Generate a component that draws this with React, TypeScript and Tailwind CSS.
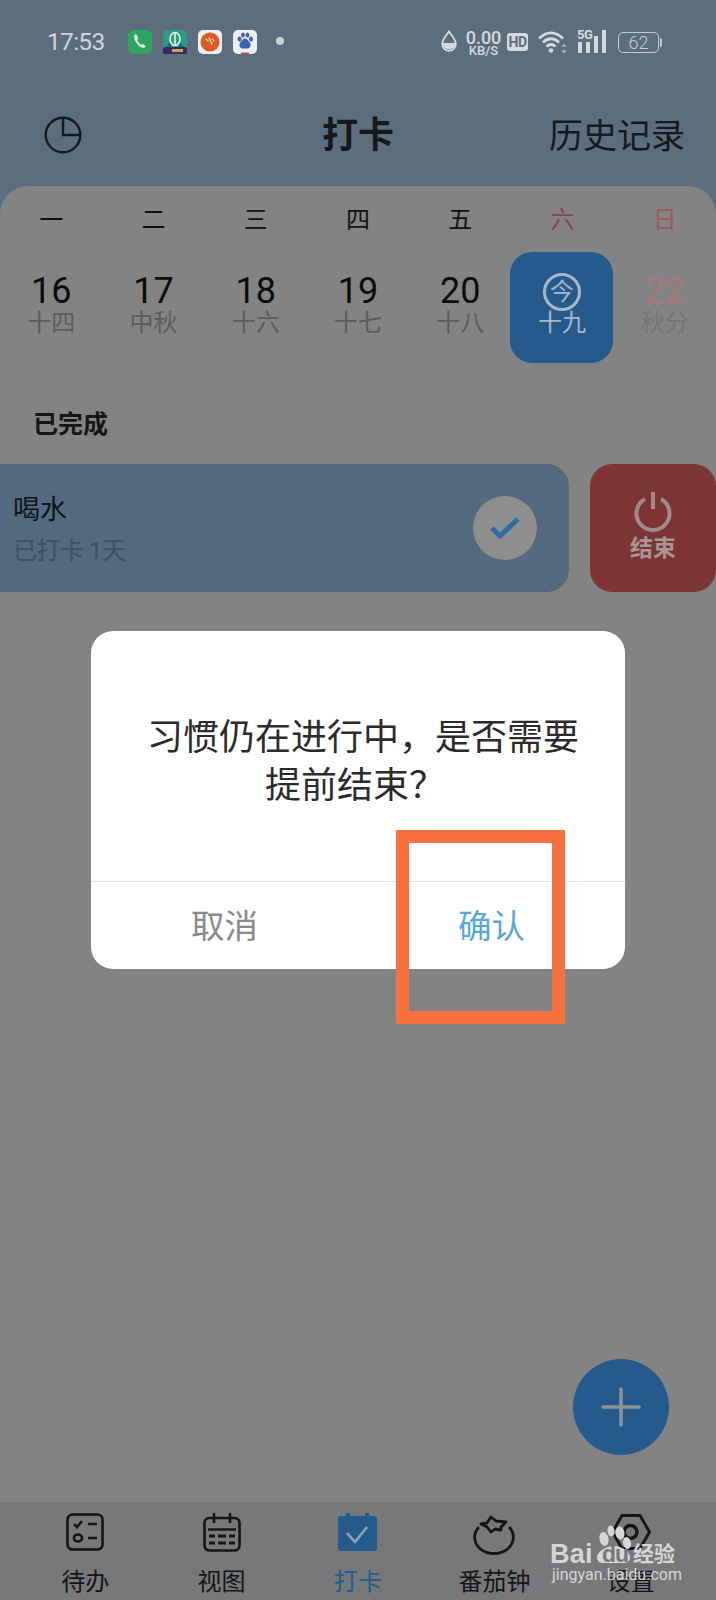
const CJK = 'font-["Roboto","Noto_Sans_CJK_SC",sans-serif]';

const days = [
  { n: "16", l: "十四" },
  { n: "17", l: "中秋" },
  { n: "18", l: "十六" },
  { n: "19", l: "十七" },
  { n: "20", l: "十八" },
];

function StatusBar() {
  return (
    <div className="flex h-[84px] items-start pt-[30px] text-[#cfd5da]">
      <span className="ml-[47px] w-[81px] text-[24.500px] leading-[24px] tracking-[-0.7px]">17:53</span>
      <div className="flex items-start gap-[11px]">
        <svg width="24" height="24" viewBox="0 0 24 24">
          <rect width="24" height="24" rx="5" fill="#2ea55f" />
          <path d="M6.500 5c-1.200 1-.8 3.200 1 6.200 1.800 3 4.300 5.800 6.900 6.600 1.500.5 2.800-.5 3.200-1.600l-3-2.400-1.600 1.100c-1.200-.6-3.300-3.300-3.900-4.900l1.300-1.500-1.600-3.700c-1-.4-1.700-.3-2.300.2z" fill="#d8f3df" />
        </svg>
        <svg width="24" height="24" viewBox="0 0 24 24">
          <rect width="24" height="24" rx="5" fill="#2f9a85" />
          <rect y="17" width="24" height="7" rx="2" fill="#352a66" />
          <path d="M3 17l5-6v6zM21 17l-5-6v6z" fill="#1c6a78" />
          <ellipse cx="12" cy="9" rx="5" ry="6.500" fill="none" stroke="#dff3e6" strokeWidth="1.600" />
          <path d="M12 3v12" stroke="#dff3e6" strokeWidth="1.600" />
          <rect x="9" y="19" width="11" height="3" fill="#cfa648" />
        </svg>
        <svg width="24" height="24" viewBox="0 0 24 24">
          <rect width="24" height="24" rx="5" fill="#eef0f1" />
          <circle cx="12" cy="12" r="9.500" fill="#dd5a1e" />
          <path d="M8 9l2 2M11 8l3 6M14 9l2 2" stroke="#f5d9c0" strokeWidth="1.300" strokeLinecap="round" />
        </svg>
        <svg width="24" height="24" viewBox="0 0 24 24">
          <rect width="24" height="24" rx="5" fill="#eef0f1" />
          <ellipse cx="6.500" cy="9" rx="2" ry="2.600" fill="#3d63b8" />
          <ellipse cx="10" cy="5" rx="1.900" ry="2.500" fill="#3d63b8" />
          <ellipse cx="14.500" cy="5" rx="1.900" ry="2.500" fill="#3d63b8" />
          <ellipse cx="18" cy="9" rx="2" ry="2.600" fill="#3d63b8" />
          <path d="M12 8.500c2 0 3 2 4.500 3.500 2 2.500 1 6.500-2 6.500h-5c-3 0-4-4-2-6.500 1.500-1.500 2.500-3.500 4.500-3.500z" fill="#3d63b8" />
          <rect x="8" y="22.500" width="8" height="1.500" fill="#c8485a" />
        </svg>
      </div>
      <span className="ml-[19px] mt-[7px] h-[8px] w-[8px] rounded-full bg-[#cbd0d5]" />
      <div className="ml-[157px] flex items-start">
        <svg width="16" height="22" viewBox="0 0 16 22">
          <path d="M8 1.500C5 6 1.200 9.500 1.200 14a6.800 6.800 0 0 0 13.600 0C14.800 9.500 11 6 8 1.500z" fill="none" stroke="#d5dade" strokeWidth="1.800" />
          <path d="M1.500 13h13a6.500 6.500 0 0 1-13 0z" fill="#d5dade" />
        </svg>
        <div className="ml-[9px] flex w-[35px] flex-col items-center">
          <span className="text-[18px] leading-[15px] font-medium text-[#d5dade]">0.00</span>
          <span className="text-[13px] leading-[11px] font-medium text-[#d5dade]">KB/S</span>
        </div>
        <span className="ml-[6px] mt-[3px] flex h-[18px] w-[21px] items-center justify-center rounded-[3px] bg-[#d5dade] text-[14px] leading-none font-bold tracking-[-0.5px] text-[#5c6d7e]">HD</span>
        <svg className="ml-[10px]" width="30" height="24" viewBox="0 0 30 24">
          <path d="M1 8.500C8.500 1 17.500 1 25 8.500M5 12.500C10 7.500 16 7.500 21 12.500M8.500 16.500c3-2.600 6-2.600 9 0" fill="none" stroke="#d5dade" strokeWidth="2.800" />
          <circle cx="13" cy="20.500" r="2.300" fill="#d5dade" />
          <path d="M26 13.500l-2.800 3.200h5.600zM26 23.500l-2.800-3.200h5.600z" fill="#aeb6be" />
        </svg>
        <div className="relative ml-[9px] h-[23px] w-[31px]">
          <span className="absolute left-0 top-[-2px] text-[13px] leading-[13px] font-bold tracking-[-0.5px] text-[#d5dade]">5G</span>
          <svg className="absolute left-0 top-0" width="31" height="23" viewBox="0 0 31 23">
            <rect x="1" y="12" width="4" height="11" fill="#d5dade" />
            <rect x="9" y="12" width="4" height="11" fill="#d5dade" />
            <rect x="17" y="6" width="4" height="17" fill="#d5dade" />
            <rect x="25" y="0" width="4" height="23" fill="#d5dade" />
          </svg>
        </div>
        <div className="ml-[10px] mt-[2px] flex items-center">
          <span className="flex h-[21px] w-[41px] items-center justify-center rounded-[5px] border-[1.500px] border-[#c5cbd1] text-[18px] leading-none font-light text-[#c5cbd1]">62</span>
          <span className="ml-[1px] h-[9px] w-[2px] rounded-r-sm bg-[#c5cbd1]" />
        </div>
      </div>
    </div>
  );
}

function CheckCircle() {
  return (
    <span className="flex h-[64px] w-[64px] items-center justify-center rounded-full bg-[#8e8e8c]">
      <svg width="30" height="22" viewBox="0 0 30 22">
        <path d="M2 11l8 8L28 2" fill="none" stroke="#2f6ca5" strokeWidth="5" strokeLinejoin="round" />
      </svg>
    </span>
  );
}

function NavIcon({ name }: { name: string }) {
  const s = "#141516";
  if (name === "todo")
    return (
      <svg width="38" height="38" viewBox="0 0 38 38" fill="none" stroke={s} strokeWidth="2.600">
        <rect x="1.500" y="1.500" width="35" height="35" rx="5" />
        <path d="M8 11l3 3 5-6M22 11h9M22 25h9" />
        <ellipse cx="12" cy="25" rx="4" ry="3.500" />
      </svg>
    );
  if (name === "view")
    return (
      <svg width="38" height="39" viewBox="0 0 38 39" fill="none" stroke={s} strokeWidth="2.600">
        <rect x="1.500" y="5" width="35" height="32.500" rx="5" />
        <path d="M11 0v10M27 0v10M5 16.500h28" />
        <path d="M6 23h6M15 23h8M26 23h6M6 30h6M15 30h8M26 30h6" strokeWidth="3" />
      </svg>
    );
  if (name === "punch")
    return (
      <svg width="39" height="38" viewBox="0 0 39 38">
        <rect x="0" y="3" width="39" height="35" rx="3" fill="#255b8c" />
        <rect x="8" y="0" width="4" height="5" fill="#255b8c" />
        <rect x="27" y="0" width="4" height="5" fill="#255b8c" />
        <path d="M9 20l8 9 12-15" fill="none" stroke="#8ea3b6" strokeWidth="2.600" />
      </svg>
    );
  if (name === "tomato")
    return (
      <svg className="mt-[2px]" width="42" height="40" viewBox="0 0 42 40" fill="none" stroke={s} strokeWidth="2.800">
        <path d="M6 12C2 16 1 20 2 25c2 9 10 13.500 19 13.500S38 34 40 25c1-5-1-10-4-13" />
        <path d="M8 9l6-1 4-6 5 4 10 1-5 5 0 3-6-1-4 3-4-5z" fill="#777879" strokeLinejoin="round" />
      </svg>
    );
  return (
    <svg className="mt-[1px]" width="40" height="36" viewBox="0 0 40 36" fill="none" stroke={s} strokeWidth="2.800">
      <path d="M11 1.500h18l9.500 16.500-9.500 16.500H11L1.500 18z" />
      <circle cx="19.500" cy="18" r="6.500" strokeWidth="3.500" />
    </svg>
  );
}

const navs = [
  { n: "todo", l: "待办", c: "text-[#141516]" },
  { n: "view", l: "视图", c: "text-[#141516]" },
  { n: "punch", l: "打卡", c: "text-[#255b8c]" },
  { n: "tomato", l: "番茄钟", c: "text-[#141516]" },
  { n: "set", l: "设置", c: "text-[#141516]" },
];

function Watermark() {
  return (
    <div className="absolute left-[550px] top-[1525px] h-[60px] w-[130px] text-[#d6d6d6]">
      <svg className="absolute left-[47px] top-0" width="36" height="40" viewBox="0 0 36 40" fill="#d6d6d6">
        <ellipse cx="7" cy="14" rx="4.500" ry="7" transform="rotate(-12 7 14)" />
        <ellipse cx="14" cy="6" rx="3.500" ry="5.500" transform="rotate(-8 14 6)" />
        <ellipse cx="23" cy="8" rx="4.500" ry="6.500" transform="rotate(-8 23 8)" />
        <ellipse cx="30" cy="18" rx="4" ry="6" transform="rotate(-12 30 18)" />
        <path d="M17 21c8 0 16 6 16 11 0 5-3 6-7 6H7c-4 0-7-1-7-6 0-5 9-11 17-11z" />
      </svg>
      <span className="absolute left-0 top-[14px] text-[27px] leading-[30px] font-bold tracking-[0.3px] font-['Liberation_Sans',sans-serif]">Bai</span>
      <span className="absolute left-[52px] top-[17px] text-[23px] leading-[24px] font-bold tracking-[-1px] text-[#777879] font-['Liberation_Sans',sans-serif]">du</span>
      <span className="absolute left-[83px] top-[16px] text-[21px] leading-[26px] font-bold">经验</span>
      <span className="absolute left-[2px] top-[41px] text-[16px] leading-[18px] whitespace-nowrap font-['Roboto',sans-serif]">jingyan.baidu.com</span>
    </div>
  );
}

export default function App() {
  return (
    <div className={`relative flex h-[1600px] w-[716px] flex-col overflow-hidden bg-[#5c6d7e] ${CJK}`}>
      <StatusBar />
      <header className="flex h-[102px] items-start pt-[33px]">
        <svg className="ml-[44px] -mt-[1px]" width="38" height="38" viewBox="0 0 38 38" fill="none" stroke="#15191c" strokeWidth="2.400">
          <circle cx="19" cy="19" r="17.300" />
          <path d="M19 2v17h17" />
        </svg>
        <h1 className="ml-[240px] w-[227px] text-[36px] leading-[38px] font-bold text-[#15191c]">打卡</h1>
        <span className="text-[34px] leading-[38px] text-[#15191c]">历史记录</span>
      </header>
      <main className="flex flex-1 flex-col rounded-t-[28px] bg-[#838383]">
        <div className="grid grid-cols-7 pb-[3px] pt-[5px] text-center text-[24px] leading-[58px] text-[#111]">
          <span>一</span>
          <span>二</span>
          <span>三</span>
          <span>四</span>
          <span>五</span>
          <span className="text-[#8a4544]">六</span>
          <span className="text-[#9a5a5a]">日</span>
        </div>
        <div className="grid h-[111px] grid-cols-7 text-center">
          {days.map((d) => (
            <div key={d.n} className="flex flex-col items-center pt-[21px]">
              <span className="text-[36px] leading-[36px] text-[#0c0c0c]">{d.n}</span>
              <span className="mt-[1px] text-[24px] leading-[26px] text-[#5c5c5c]">{d.l}</span>
            </div>
          ))}
          <div className="-ml-[1px] flex w-[103px] flex-col items-center rounded-[22px] bg-[#255b8c] pt-[21px]">
            <span className="flex h-[38px] w-[38px] items-center justify-center rounded-full border-[3px] border-[#a9b7c4] text-[24px] leading-none text-[#a9b7c4]">今</span>
            <span className="text-[24px] leading-[24px] text-[#a9b7c4]">十九</span>
          </div>
          <div className="flex flex-col items-center pt-[21px]">
            <span className="text-[36px] leading-[36px] text-[#a87878]">22</span>
            <span className="mt-[1px] text-[24px] leading-[26px] text-[#767676]">秋分</span>
          </div>
        </div>
        <h2 className="mt-[45px] ml-[33px] text-[25px] leading-[34px] font-bold text-[#161616]">已完成</h2>
        <div className="mt-[22px] flex h-[128px] gap-[21px]">
          <div className="flex w-[569px] items-center justify-between rounded-r-[22px] bg-[#536a80] pl-[13px] pr-[32px]">
            <div className="flex flex-col pt-[3px]">
              <span className="text-[27px] leading-[42px] text-[#0f1418]">喝水</span>
              <span className="text-[24px] leading-[40px] tracking-[-0.5px] text-[#3f5164]">已打卡 1天</span>
            </div>
            <CheckCircle />
          </div>
          <div className="flex flex-1 flex-col items-center rounded-[22px] bg-[#7c3434] pt-[27px]">
            <svg width="38" height="41" viewBox="0 0 38 41" fill="none" stroke="#a08b8b" strokeWidth="4">
              <path d="M11 8a16.500 16.500 0 1 0 16 0M19 1v17" />
            </svg>
            <span className="mt-[3px] text-[23px] leading-[28px] font-bold text-[#a89595]">结束</span>
          </div>
        </div>
      </main>
      <nav className="grid h-[98px] grid-cols-5 bg-[#777879] px-[17px]">
        {navs.map((n) => (
          <div key={n.n} className="relative flex flex-col items-center">
            <div className="flex h-[66px] items-start pt-[11px]">
              <NavIcon name={n.n} />
            </div>
            <span className={`text-[24px] leading-[28px] whitespace-nowrap ${n.c}`}>{n.l}</span>
          </div>
        ))}
      </nav>

      <button className="absolute left-[573px] top-[1359px] flex h-[96px] w-[96px] items-center justify-center rounded-full bg-[#255b8c]">
        <svg width="40" height="40" viewBox="0 0 40 40" stroke="#8d9296" strokeWidth="3.500" strokeLinecap="round">
          <path d="M20 2v36M2 20h36" />
        </svg>
      </button>

      <div className="absolute left-[91px] top-[631px] flex h-[338px] w-[534px] flex-col rounded-[22px] bg-white">
        <div className="flex h-[250px] flex-col items-center justify-center pt-[11px] pl-[10px] text-center text-[36px] leading-[48px] text-[#2b2b2b]">
          <p>习惯仍在进行中，是否需要</p>
          <p className="pr-[16px]">提前结束？</p>
        </div>
        <div className="grid flex-1 grid-cols-2 border-t-[1.500px] border-[#e5e5e5] text-center text-[33.500px]">
          <span className="pt-[25px] leading-[40px] text-[#8a8a8a]">取消</span>
          <span className="pt-[25px] leading-[40px] text-[#5aa6dc]">确认</span>
        </div>
      </div>

      <div className="absolute left-[396px] top-[830px] h-[194px] w-[169px] border-[13px] border-[#f97140]" />

      <Watermark />
    </div>
  );
}
